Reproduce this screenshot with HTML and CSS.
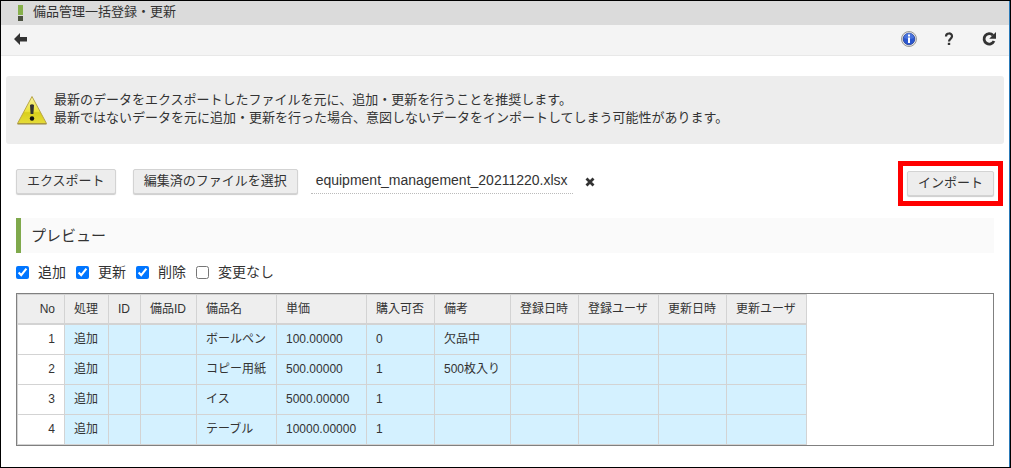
FILE: index.html
```html
<!DOCTYPE html>
<html lang="ja">
<head>
<meta charset="utf-8">
<title>備品管理一括登録・更新</title>
<link rel="stylesheet" href="styles.css">
</head>
<body>
<div class="window">
  <header class="titlebar">
    <span class="mark"></span>
    <h1 class="title">備品管理一括登録・更新</h1>
  </header>
  <nav class="toolbar">
    <button class="icon-btn" type="button" aria-label="戻る">
      <svg width="14" height="12" viewBox="0 0 14 12"><path d="M0 6 6 0V4H13V8.500H6V12Z" fill="#333"/></svg>
    </button>
    <div class="tools">
      <button class="icon-btn" type="button" aria-label="情報">
        <svg width="16" height="16" viewBox="0 0 16 16"><circle cx="8" cy="8" r="7.500" fill="#e4e4e4" stroke="#999"/><circle cx="8" cy="8" r="5.800" fill="#2a56cf" stroke="#23409c" stroke-width=".8"/><path d="M3 7a5 5 0 0 1 10 0Q8 9 3 7Z" fill="#5f87e8" opacity=".6"/><path d="M7 3.500h2v2H7ZM7 6.500h2v5.500H7Z" fill="#fff"/></svg>
      </button>
      <button class="icon-btn" type="button" aria-label="ヘルプ">
        <svg width="16" height="16" viewBox="0 0 16 16"><path d="M5 5.500C5 1.500 11 1.500 11 5.300 11 8 8 7.800 8 10.500" fill="none" stroke="#333" stroke-width="2.200"/><path d="M6.800 11.800h2.400v2.200H6.800Z" fill="#333"/></svg>
      </button>
      <button class="icon-btn" type="button" aria-label="再読み込み">
        <svg width="16" height="16" viewBox="0 0 16 16"><path d="M12 4.200A5.200 5.200 0 1 0 13 10" fill="none" stroke="#333" stroke-width="2.800"/><path d="M15 1v6.800H8.200Z" fill="#333"/></svg>
      </button>
    </div>
  </nav>
  <main class="content">
    <section class="notice">
      <svg class="notice-icon" width="32" height="30" viewBox="0 0 32 30">
        <defs><linearGradient id="warn" x1="0" y1="0" x2="0" y2="1"><stop offset="0" stop-color="#f8f3a0"/><stop offset=".55" stop-color="#ece33a"/><stop offset=".6" stop-color="#d9cf1c"/><stop offset="1" stop-color="#e6dc38"/></linearGradient></defs>
        <path d="M16 1.500 30.500 28.500H1.500Z" fill="url(#warn)" stroke="#b9a648" stroke-linejoin="round"/>
        <path d="M1.500 29h29" stroke="#96863a"/>
        <path d="M14 10q2-1.500 4 0l-.6 9h-2.800Z" fill="#333"/><circle cx="16" cy="23.500" r="2.200" fill="#111"/>
      </svg>
      <p class="notice-text">最新のデータをエクスポートしたファイルを元に、追加・更新を行うことを推奨します。<br>最新ではないデータを元に追加・更新を行った場合、意図しないデータをインポートしてしまう可能性があります。</p>
    </section>
    <div class="actions">
      <div class="files">
        <button class="btn" type="button">エクスポート</button>
        <button class="btn" type="button">編集済のファイルを選択</button>
        <div class="file">
          <span class="file-name">equipment_management_20211220.xlsx</span>
          <button class="icon-btn" type="button" aria-label="ファイルを外す">
            <svg width="10" height="10" viewBox="0 0 10 10"><path d="M1.500 1.500 8.500 8.500M8.500 1.500 1.500 8.500" stroke="#333" stroke-width="2.800"/></svg>
          </button>
        </div>
      </div>
      <div class="highlight"><button class="btn" type="button">インポート</button></div>
    </div>
    <section class="preview">
      <h2 class="heading">プレビュー</h2>
      <div class="filters">
        <label class="filter"><input type="checkbox" checked>追加</label>
        <label class="filter"><input type="checkbox" checked>更新</label>
        <label class="filter"><input type="checkbox" checked>削除</label>
        <label class="filter"><input type="checkbox">変更なし</label>
      </div>
      <div class="table-box">
        <table class="grid">
          <colgroup><col class="c-no"><col class="c-op"><col class="c-id"><col class="c-item"><col class="c-wide"><col class="c-price"><col class="c-date"><col class="c-memo"><col class="c-date"><col class="c-wide"><col class="c-date"><col class="c-wide"></colgroup>
          <thead><tr><th>No</th><th>処理</th><th>ID</th><th>備品ID</th><th>備品名</th><th>単価</th><th>購入可否</th><th>備考</th><th>登録日時</th><th>登録ユーザ</th><th>更新日時</th><th>更新ユーザ</th></tr></thead>
          <tbody>
            <tr><td>1</td><td>追加</td><td></td><td></td><td>ボールペン</td><td>100.00000</td><td>0</td><td>欠品中</td><td></td><td></td><td></td><td></td></tr>
            <tr><td>2</td><td>追加</td><td></td><td></td><td>コピー用紙</td><td>500.00000</td><td>1</td><td>500枚入り</td><td></td><td></td><td></td><td></td></tr>
            <tr><td>3</td><td>追加</td><td></td><td></td><td>イス</td><td>5000.00000</td><td>1</td><td></td><td></td><td></td><td></td><td></td></tr>
            <tr><td>4</td><td>追加</td><td></td><td></td><td>テーブル</td><td>10000.00000</td><td>1</td><td></td><td></td><td></td><td></td><td></td></tr>
          </tbody>
        </table>
      </div>
    </section>
  </main>
</div>
</body>
</html>
```
FILE: styles.css
```css
* { box-sizing: border-box; }
body {
  margin: 0;
  background: #fff;
  color: #333;
  font: 13px/18px "Liberation Sans", "Noto Sans CJK JP", sans-serif;
}
h1, h2, p { margin: 0; font-weight: normal; }
button { font: inherit; color: inherit; }
svg { display: block; }

.window {
  min-height: 100vh;
  border: 1px solid #000;
  box-shadow: inset -1px 0 #2a7ab8;
  padding-right: 1px;
}
.titlebar {
  display: flex;
  align-items: center;
  gap: 10px;
  height: 24px;
  padding-left: 17px;
  background: #dbdbdb;
}
.mark {
  width: 5px;
  height: 16px;
  background: linear-gradient(#86b04b 10px, #dbdbdb 10px 11px, #4b5140 11px);
}
.title { font-size: 13px; line-height: 18px; padding-bottom: 2px; }
.toolbar {
  display: flex;
  align-items: center;
  justify-content: space-between;
  height: 31px;
  padding: 0 12px 2px 13px;
  background: #f4f4f4;
  border-bottom: 1px solid #e8e8e8;
}
.tools { display: flex; gap: 24px; }
.icon-btn { padding: 0; border: 0; background: none; }

.content { padding: 20px 5px 0; }
.notice {
  display: flex;
  align-items: center;
  gap: 6px;
  padding: 15px 10px;
  background: #ededed;
  border-radius: 3px;
}
.notice-icon { flex: none; }
.notice-text { padding-bottom: 2px; }

.actions {
  display: flex;
  align-items: center;
  justify-content: space-between;
  padding: 17px 1px 0 10px;
}
.files { display: flex; align-items: center; gap: 17px; padding-bottom: 4px; }
.btn {
  height: 25px;
  padding: 0 10px 1px;
  border: 1px solid #d3d3d3;
  border-radius: 2px;
  background: #ededed;
  box-shadow: 0 1px 1px #ccc;
  white-space: nowrap;
}
.highlight { display: flex; padding: 5px 4px; border: 5px solid #f00; }
.file { display: flex; align-items: center; gap: 12px; margin-left: -4px; }
.file-name {
  height: 25px;
  padding: 0 5px;
  border-bottom: 1px dotted #bbb;
  font-size: 14px;
  line-height: 22px;
}

.preview { padding: 12px 10px 0; }
.heading {
  height: 35px;
  padding-left: 10px;
  border-left: 5px solid #7fa94c;
  background: #fafafa;
  font-size: 15px;
  line-height: 35px;
}
.filters { display: flex; gap: 10px; padding: 9px 0 11px; }
.filter { display: flex; align-items: center; gap: 9px; font-size: 14px; line-height: 20px; }
.filter input { width: 13px; height: 13px; margin: 0; }

.table-box { border: 1px solid #808080; overflow: auto; }
.grid {
  width: 790px;
  table-layout: fixed;
  border-collapse: separate;
  border-spacing: 0;
  border: solid #d3d3d3;
  border-width: 1px 0 0 1px;
  font-size: 12px;
  line-height: 18px;
}
.grid th, .grid td {
  height: 30px;
  padding: 0 9px;
  border: solid #d3d3d3;
  border-width: 0 1px 1px 0;
  text-align: left;
  font-weight: normal;
  white-space: nowrap;
}
.grid th { background: #eee; border-bottom-width: 2px; }
.grid td { background: #d4f1ff; padding-bottom: 1px; }
.grid th:first-child, .grid td:first-child { text-align: right; }
.grid td:first-child { background: #fff; }
.c-no { width: 47px; }
.c-op { width: 44px; }
.c-id { width: 32px; }
.c-item { width: 56px; }
.c-wide { width: 80px; }
.c-price { width: 90px; }
.c-date { width: 68px; }
.c-memo { width: 76px; }
```
